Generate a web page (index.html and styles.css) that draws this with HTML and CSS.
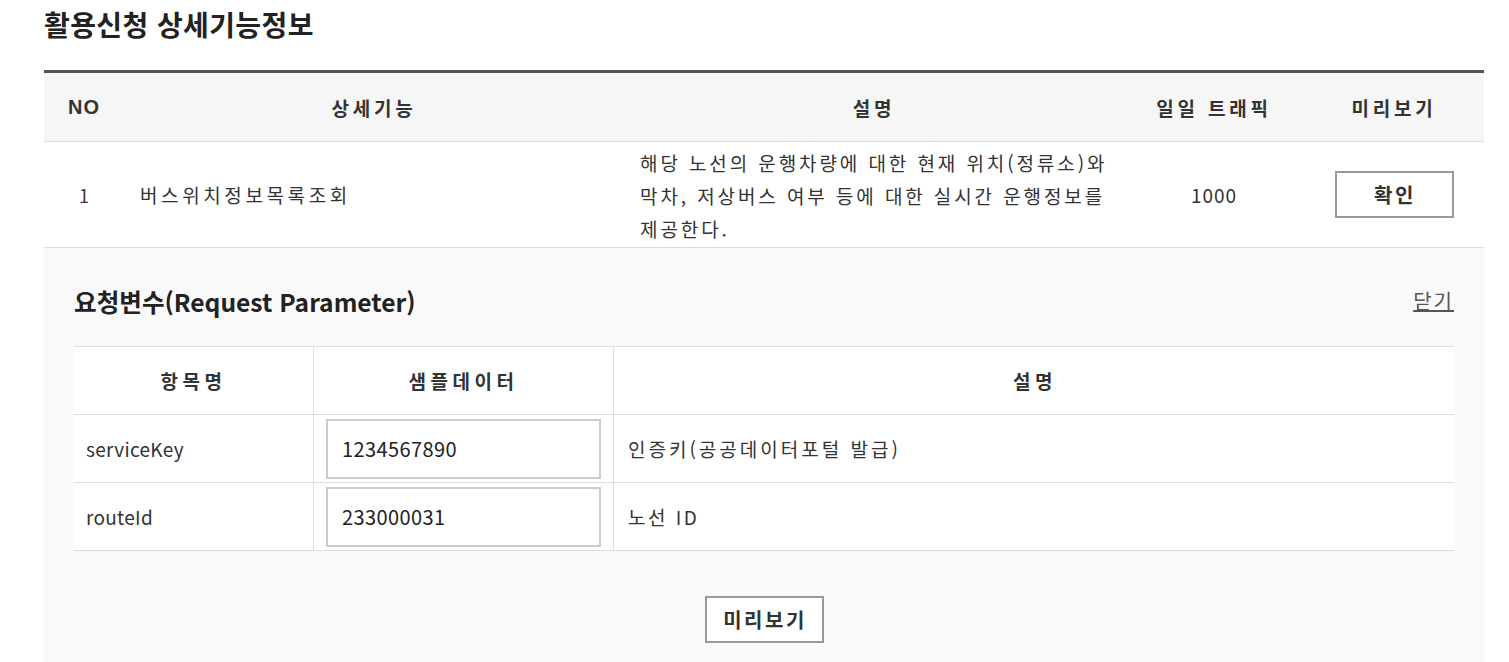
FILE: index.html
```html
<!DOCTYPE html>
<html lang="ko">
<head>
<meta charset="utf-8">
<title>활용신청 상세기능정보</title>
<link rel="stylesheet" href="styles.css">
</head>
<body>
<div class="page">
  <h2 class="title">활용신청 상세기능정보</h2>
  <div class="func-table">
    <div class="row head">
      <div class="c c-no">NO</div>
      <div class="c c-name">상세기능</div>
      <div class="c c-desc">설명</div>
      <div class="c c-traffic">일일 트래픽</div>
      <div class="c c-preview">미리보기</div>
    </div>
    <div class="row body">
      <div class="c c-no">1</div>
      <div class="c c-name left">버스위치정보목록조회</div>
      <div class="c c-desc left">해당 노선의 운행차량에 대한 현재 위치(정류소)와 막차, 저상버스 여부 등에 대한 실시간 운행정보를 제공한다.</div>
      <div class="c c-traffic">1000</div>
      <div class="c c-preview"><button class="btn">확인</button></div>
    </div>
  </div>
  <div class="detail">
    <div class="detail-head">
      <h3 class="sub-title">요청변수(Request Parameter)</h3>
      <a class="close" href="#">닫기</a>
    </div>
    <div class="param-table">
      <div class="prow phead">
        <div class="pc p-name">항목명</div>
        <div class="pc p-sample">샘플데이터</div>
        <div class="pc p-desc">설명</div>
      </div>
      <div class="prow">
        <div class="pc p-name left">serviceKey</div>
        <div class="pc p-sample"><input class="inp" type="text" value="1234567890"></div>
        <div class="pc p-desc left">인증키(공공데이터포털 발급)</div>
      </div>
      <div class="prow">
        <div class="pc p-name left">routeId</div>
        <div class="pc p-sample"><input class="inp" type="text" value="233000031"></div>
        <div class="pc p-desc left short">노선 ID</div>
      </div>
    </div>
    <div class="actions">
      <button class="btn">미리보기</button>
    </div>
  </div>
</div>
</body>
</html>
```

FILE: styles.css
```css
* { box-sizing: border-box; }
html, body { margin: 0; padding: 0; background: #fff; }
body {
  font-family: "Noto Sans CJK KR", "Noto Sans", sans-serif;
  color: #333;
}
.page {
  width: 1440px;
  margin-left: 44px;
}
.title {
  margin: 0;
  height: 70px;
  padding-top: 4px;
  line-height: 40px;
  font-size: 28px;
  font-weight: 700;
  color: #222;
  letter-spacing: 0.4px;
}
.func-table {
  border-top: 3px solid #555;
}
.row {
  display: flex;
  border-bottom: 1px solid #ddd;
}
.row.head {
  background: #f6f6f6;
  height: 69px;
  font-weight: 700;
  font-size: 19px;
  color: #333;
}
.row.head .c { letter-spacing: 3.8px; }
.row.head .c-no {
  font-family: "Liberation Sans", "Noto Sans CJK KR", sans-serif;
  font-size: 20px;
  letter-spacing: 1px;
}
.row.body {
  background: #fff;
  height: 106px;
  font-size: 19px;
  color: #333;
}
.c {
  display: flex;
  align-items: center;
  justify-content: center;
  padding: 0 16px;
}
.c.left { justify-content: flex-start; }
.c-no { width: 80px; }
.c-name { width: 500px; }
.c-desc { width: 500px; }
.c-traffic { width: 180px; }
.c-preview { width: 180px; }
.row.body .c-no { color: #5a2a2a; font-size: 18px; }
.row.body .c-name { letter-spacing: 3.6px; }
.row.body .c-desc {
  display: block;
  line-height: 33px;
  text-align: left;
  padding: 4px 8px 0 16px;
  letter-spacing: 2.9px;
  word-break: keep-all;
}
.row.body .c-traffic { letter-spacing: 1px; }
.btn {
  font-family: "Noto Sans CJK KR", sans-serif;
  font-weight: 700;
  font-size: 20px;
  color: #333;
  background: #fff;
  border: 2px solid #999;
  width: 119px;
  height: 47px;
  padding: 0 0 0 2px;
  letter-spacing: 2.5px;
  cursor: pointer;
}
.detail {
  background: #f9f9f9;
  padding: 0 30px 19px;
}
.detail-head {
  display: flex;
  justify-content: space-between;
  align-items: center;
  padding-top: 33px;
  height: 98px;
  padding-bottom: 26px;
}
.sub-title {
  margin: 0;
  font-size: 24.6px;
  font-weight: 700;
  color: #222;
  letter-spacing: 0;
}
.close {
  font-size: 20px;
  color: #555;
  text-decoration: underline;
  letter-spacing: 2px;
}
.param-table {
  border-top: 1px solid #ddd;
  background: #fff;
}
.prow {
  display: flex;
  height: 68px;
  border-bottom: 1px solid #ddd;
}
.pc {
  display: flex;
  align-items: center;
  justify-content: center;
  padding: 0 12px;
  font-size: 19px;
  color: #333;
  letter-spacing: 0.3px;
}
.pc.left { justify-content: flex-start; }
.phead .pc { font-weight: 700; font-size: 19px; letter-spacing: 4.5px; }
.p-name { width: 240px; border-right: 1px solid #ddd; }
.p-sample { width: 300px; border-right: 1px solid #ddd; }
.p-desc { flex: 1; padding-left: 14px; }
.prow .p-desc.left { letter-spacing: 3px; }
.prow .p-desc.short { letter-spacing: 2.5px; }
.inp {
  width: 275px;
  height: 60px;
  border: 2px solid #ccc;
  background: #fff;
  padding: 0 14px;
  font-family: "Noto Sans CJK KR", sans-serif;
  font-size: 20px;
  letter-spacing: 0.4px;
  color: #222;
}
.actions {
  display: flex;
  justify-content: center;
  padding-top: 45px;
}
```
